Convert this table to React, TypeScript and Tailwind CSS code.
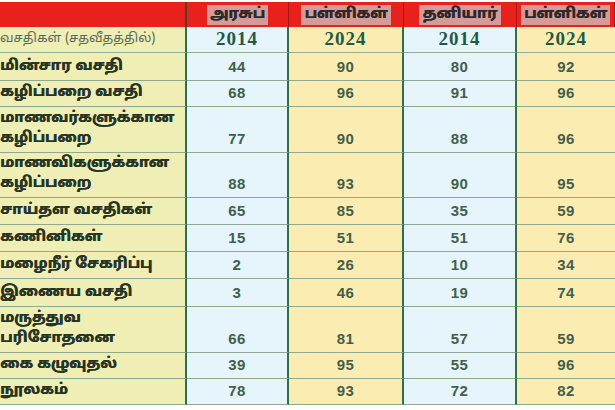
const rows = [
  { label: ["மின்சார வசதி"], v: ["44", "90", "80", "92"], h: "h-[28px]" },
  { label: ["கழிப்பறை வசதி"], v: ["68", "96", "91", "96"], h: "h-[26px]" },
  { label: ["மாணவர்களுக்கான", "கழிப்பறை"], v: ["77", "90", "88", "96"], h: "h-[46px]" },
  { label: ["மாணவிகளுக்கான", "கழிப்பறை"], v: ["88", "93", "90", "95"], h: "h-[45px]" },
  { label: ["சாய்தள வசதிகள்"], v: ["65", "85", "35", "59"], h: "h-[27px]" },
  { label: ["கணினிகள்"], v: ["15", "51", "51", "76"], h: "h-[27px]" },
  { label: ["மழைநீர் சேகரிப்பு"], v: ["2", "26", "10", "34"], h: "h-[27px]" },
  { label: ["இணைய வசதி"], v: ["3", "46", "19", "74"], h: "h-[28px]" },
  { label: ["மருத்துவ", "பரிசோதனை"], v: ["66", "81", "57", "59"], h: "h-[46px]" },
  { label: ["கை கழுவுதல்"], v: ["39", "95", "55", "96"], h: "h-[26px]" },
  { label: ["நூலகம்"], v: ["78", "93", "72", "82"], h: "h-[26px]" },
]

const tamil = "font-['Noto_Sans_Tamil','Lohit_Tamil','Noto_Sans','DejaVu_Sans',sans-serif]"

const colBg = ["bg-[#e5f5fb]", "bg-[#fbedb2]", "bg-[#e5f5fb]", "bg-[#fbedb2]"]

const App = () => {
  return (
    <div className="w-[615px] h-[410px] bg-white overflow-hidden pt-[2px]">
      <div className="grid grid-cols-[187px_102px_115px_113px_98px]">
        {/* header */}
        <div className="h-[25px] bg-[#e8211d] border-r-2 border-[#5a3a2a]" />
        {["அரசுப்", "பள்ளிகள்", "தனியார்", "பள்ளிகள்"].map((t, i) => (
          <div
            key={i}
            className={`h-[25px] bg-[#e8211d] flex items-center justify-center border-r border-[#a81612] ${tamil}`}
          >
            <span className="text-[15px] font-bold text-[#2a2a2a] bg-[#cfcfcf]/70 px-[3px] leading-[20px] whitespace-nowrap [text-shadow:0.5px_0_0_#2a2a2a]">
              {t}
            </span>
          </div>
        ))}

        {/* years */}
        <div className={`h-[26px] bg-[#efeeb4] border-r-2 border-[#2f6e4e] border-b border-b-[#8fb096] flex items-end ${tamil}`}>
          <span className="mb-[3px] text-[13px] text-[#5a6a5a] whitespace-nowrap">
            வசதிகள் (சதவீதத்தில்)
          </span>
        </div>
        {["2014", "2024", "2014", "2024"].map((y, i) => (
          <div
            key={i}
            className={`h-[26px] ${colBg[i]} flex items-center justify-center border-b border-[#8fb096] ${i < 3 ? "border-r-2 border-r-[#2f6e4e]" : ""}`}
          >
            <span className="font-['Liberation_Serif',serif] font-bold text-[19px] tracking-[1px] text-[#1f5a45]">
              {y}
            </span>
          </div>
        ))}

        {rows.map((r, ri) => (
          <Row key={ri} label={r.label} v={r.v} h={r.h} />
        ))}
      </div>
    </div>
  )
}

const Row = ({ label, v, h }: { label: string[]; v: string[]; h: string }) => {
  return (
    <>
      <div
        className={`${h} bg-[#efeeb4] border-r-2 border-[#2f6e4e] border-b border-b-[#8fa890] flex flex-col justify-end pb-[3px] ${tamil}`}
      >
        {label.map((l, i) => (
          <span
            key={i}
            className="text-[15px] font-bold leading-[20px] text-[#263426] whitespace-nowrap [text-shadow:0.5px_0_0_#263426]"
          >
            {l}
          </span>
        ))}
      </div>
      {v.map((n, i) => (
        <div
          key={i}
          className={`${h} ${colBg[i]} flex items-end justify-center pb-[5px] border-b border-[#8fa890] ${i < 3 ? "border-r-2 border-r-[#2f6e4e]" : ""}`}
        >
          <span className="font-['Liberation_Sans',sans-serif] font-bold text-[15px] leading-[17px] tracking-[0.5px] text-[#435e4c]">
            {n}
          </span>
        </div>
      ))}
    </>
  )
}

export default App
